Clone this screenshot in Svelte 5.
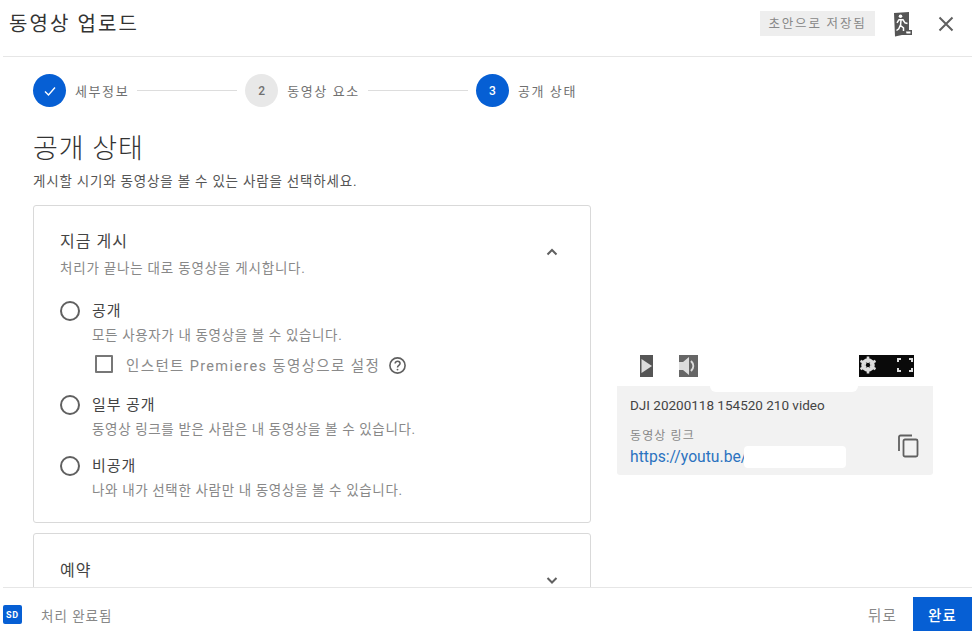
<script>
  const options = [
    { title: '공개', desc: '모든 사용자가 내 동영상을 볼 수 있습니다.', premiere: true },
    { title: '일부 공개', desc: '동영상 링크를 받은 사람은 내 동영상을 볼 수 있습니다.' },
    { title: '비공개', desc: '나와 내가 선택한 사람만 내 동영상을 볼 수 있습니다.' }
  ];
</script>

<div class="dialog">
  <header class="top">
    <h1>동영상 업로드</h1>
    <span class="saved">초안으로 저장됨</span>
    <svg class="exit" width="20" height="26" viewBox="0 0 20 26">
      <path d="M1 2 L16 1 V19 H19 V24 H9 L2 25.5Z" fill="#555"/>
      <circle cx="7.5" cy="5.2" r="1.8" fill="#fff"/>
      <path d="M5.5 8.8 L10 8.8 L12 11.8 L14.5 12.5 M8 9.2 L7.5 14.5 L10.5 16.8 L10.5 20 M7.2 14.5 L5.8 17.8 L3.5 19.5 M5.8 9 L4 11.8" stroke="#fff" stroke-width="1.5" fill="none"/>
      <path d="M13 20.5 L17.5 20.5 L17.5 22.5 L13.5 22.5Z" fill="#fff"/>
    </svg>
    <svg class="close" width="24" height="24" viewBox="0 0 24 24">
      <path d="M5.5 5.5 L18.5 18.5 M18.5 5.5 L5.5 18.5" stroke="#606060" stroke-width="2" fill="none"/>
    </svg>
  </header>

  <main class="body">
    <div class="steps">
      <span class="dot on">
        <svg width="16" height="16" viewBox="0 0 16 16"><path d="M3 8.5 L6.5 12 L13 4.5" stroke="#fff" stroke-width="1.4" fill="none"/></svg>
      </span>
      <span class="lbl">세부정보</span>
      <span class="line"></span>
      <span class="dot">2</span>
      <span class="lbl">동영상 요소</span>
      <span class="line"></span>
      <span class="dot on">3</span>
      <span class="lbl">공개 상태</span>
    </div>

    <div class="columns">
      <section class="left">
        <h2>공개 상태</h2>
        <p class="sub">게시할 시기와 동영상을 볼 수 있는 사람을 선택하세요.</p>

        <div class="card first">
          <div class="card-head">
            <div>
              <div class="card-title">지금 게시</div>
              <div class="card-desc">처리가 끝나는 대로 동영상을 게시합니다.</div>
            </div>
            <svg class="chev" width="24" height="24" viewBox="0 0 24 24"><path d="M7.5 14.5 L12 10 L16.5 14.5" stroke="#606060" stroke-width="2" fill="none"/></svg>
          </div>

          {#each options as o}
            <div class="opt">
              <span class="radio"></span>
              <div class="opt-text">
                <div class="opt-title">{o.title}</div>
                <div class="opt-desc">{o.desc}</div>
                {#if o.premiere}
                  <div class="premiere">
                    <span class="check"></span>
                    <span class="pr-label">인스턴트 Premieres 동영상으로 설정</span>
                    <svg width="20" height="20" viewBox="0 0 20 20">
                      <circle cx="10" cy="10" r="8" stroke="#606060" stroke-width="1.7" fill="none"/>
                      <path d="M7.5 8 C7.5 4.8 12.7 4.9 12.7 8 C12.7 10 10 9.8 10 12" stroke="#606060" stroke-width="1.6" fill="none"/>
                      <circle cx="10" cy="14.3" r="1" fill="#606060"/>
                    </svg>
                  </div>
                {/if}
              </div>
            </div>
          {/each}
        </div>

        <div class="card second">
          <div class="card-head">
            <div class="card-title">예약</div>
            <svg class="chev" width="24" height="24" viewBox="0 0 24 24"><path d="M7.5 10 L12 14.5 L16.5 10" stroke="#606060" stroke-width="2" fill="none"/></svg>
          </div>
        </div>
      </section>

      <aside class="right">
        <div class="player">
          <div class="ctrls">
            <span class="ctl play">
              <svg width="13" height="22" viewBox="0 0 13 22"><rect width="13" height="22" fill="#555"/><path d="M1.5 4 L12 11 L1.5 18Z" fill="#ddd"/></svg>
            </span>
            <span class="ctl vol">
              <svg width="19" height="22" viewBox="0 0 19 22"><rect width="19" height="22" fill="#666"/><path d="M0 7 H4 L10 2 V20 L4 15 H0Z" fill="#ddd"/><path d="M12 6 C15 9 15 13 12 16" stroke="#ddd" stroke-width="2" fill="none"/></svg>
            </span>
            <span class="right-ctls">
              <svg width="18" height="22" viewBox="0 0 18 22">
                <circle cx="9" cy="10" r="5" stroke="#ddd" stroke-width="3.6" fill="none"/>
                <path d="M9 1.5 V18.5 M1.5 5.8 L16.5 14.2 M1.5 14.2 L16.5 5.8" stroke="#ddd" stroke-width="2.6"/>
                <circle cx="9" cy="10" r="2.2" fill="#0a0a0a"/>
              </svg>
              <svg class="full" width="16" height="14" viewBox="0 0 16 14"><path d="M1 4 V1 H4 M12 1 H15 V4 M15 10 V13 H12 M4 13 H1 V10" stroke="#ddd" stroke-width="2" fill="none"/></svg>
            </span>
          </div>
        </div>
        <div class="info">
          <span class="notch"></span>
          <div class="file">DJI 20200118 154520 210 video</div>
          <div class="link-row">
            <div>
              <div class="link-label">동영상 링크</div>
              <div class="url"><span class="link">https://youtu.be/</span><span class="mask"></span></div>
            </div>
            <svg class="copy" width="24" height="24" viewBox="0 0 24 24">
              <path d="M16 1.5 H4.5 A1.5 1.5 0 0 0 3 3 V17" stroke="#606060" stroke-width="1.8" fill="none"/>
              <rect x="7.5" y="5.5" width="14" height="17" rx="1.5" stroke="#606060" stroke-width="1.8" fill="none"/>
            </svg>
          </div>
        </div>
      </aside>
    </div>
  </main>

  <footer class="bottom">
    <span class="sd">SD</span>
    <span class="status">처리 완료됨</span>
    <span class="back">뒤로</span>
    <span class="done">완료</span>
  </footer>
</div>

<style>
  :global(body) {
    margin: 0;
    background: #fff;
    overflow: hidden;
  }
  .dialog {
    width: 972px;
    height: 635px;
    display: flex;
    flex-direction: column;
    font-family: Roboto, "Noto Sans CJK KR", sans-serif;
    color: #0d0d0d;
  }
  .top {
    flex: none;
    height: 57px;
    margin-left: 3px;
    box-sizing: border-box;
    border-bottom: 1px solid #e6e6e6;
    display: flex;
    align-items: center;
    padding: 0 14px 12px 6px;
  }
  h1 {
    margin: 0;
    font-size: 20px;
    font-weight: 400;
    letter-spacing: 2.1px;
    color: #333;
    flex: 1;
  }
  .saved {
    background: #eeeeee;
    color: #888;
    font-size: 12.5px;
    letter-spacing: 1.8px;
    height: 25px;
    line-height: 25px;
    width: 115px;
    text-align: center;
    margin-top: 2px;
  }
  .exit { margin-left: 18px; margin-top: 3px; }
  .close { margin-left: 21px; margin-top: 3px; }

  .body {
    flex: 1;
    min-height: 0;
    overflow: hidden;
    padding-left: 33px;
  }
  .steps {
    display: flex;
    align-items: center;
    height: 33px;
    margin-top: 17px;
    font-size: 13px;
    color: #707070;
    letter-spacing: 1.6px;
  }
  .dot {
    width: 33px;
    height: 33px;
    border-radius: 50%;
    background: #e8e8e8;
    display: flex;
    align-items: center;
    justify-content: center;
    font-weight: 500;
    font-size: 12px;
    letter-spacing: 0;
    color: #707070;
    flex: none;
  }
  .dot.on {
    background: #065fd4;
    color: #fff;
  }
  .lbl { margin-left: 9px; white-space: nowrap; }
  .line {
    width: 100px;
    height: 1px;
    background: #ddd;
    margin: 0 8px;
    flex: none;
  }
  .columns {
    display: flex;
    align-items: flex-start;
  }
  .left { width: 558px; flex: none; }
  h2 {
    margin: 24px 0 0;
    font-size: 27px;
    line-height: 36px;
    font-weight: 300;
    letter-spacing: 1px;
    color: #333;
  }
  .sub {
    margin: 5px 0 0;
    font-size: 13.5px;
    line-height: 18px;
    color: #555;
    letter-spacing: 0.8px;
  }
  .card {
    box-sizing: border-box;
    border: 1px solid #d9d9d9;
    border-radius: 3px;
    padding: 25px 26px 0;
  }
  .first { margin-top: 15px; height: 318px; }
  .second { margin-top: 10px; height: 80px; }
  .card-head {
    display: flex;
    justify-content: space-between;
    align-items: center;
  }
  .card-title {
    font-size: 16px;
    line-height: 22px;
    color: #444;
    letter-spacing: 1px;
  }
  .card-desc {
    font-size: 13.5px;
    line-height: 18px;
    color: #888;
    margin-top: 6px;
    letter-spacing: 0.8px;
  }
  .chev { margin-right: 0; margin-top: -4px; }
  .second .chev { margin-top: 9px; }
  .second .card-title { margin-top: -10px; }
  .opt {
    display: flex;
    margin-top: 24px;
    min-height: 45px;
  }
  .opt + .opt { margin-top: 19px; }
  .opt:last-child { margin-top: 16px; }
  .radio {
    width: 16px;
    height: 16px;
    border: 2.5px solid #606060;
    border-radius: 50%;
    flex: none;
  }
  .opt-text { margin-left: 10px; padding-left: 2px; }
  .opt-title {
    font-size: 15px;
    line-height: 20px;
    color: #444;
    letter-spacing: 0.9px;
  }
  .opt-desc {
    font-size: 13.5px;
    line-height: 18px;
    color: #888;
    margin-top: 5px;
    letter-spacing: 0.65px;
  }
  .premiere {
    display: flex;
    align-items: center;
    margin-top: 8px;
    height: 24px;
  }
  .check {
    width: 14px;
    height: 14px;
    border: 2px solid #777;
    border-radius: 1px;
    margin-left: 3px;
    flex: none;
  }
  .pr-label {
    margin-left: 13px;
    font-size: 14.5px;
    color: #8a8a8a;
    letter-spacing: 1.35px;
    white-space: nowrap;
  }
  .premiere svg { margin-left: 8px; margin-top: 2px; width: 19px; height: 19px; }

  .right {
    width: 316px;
    margin-left: 26px;
    flex: none;
    padding-top: 248px;
  }
  .player { height: 31px; }
  .ctrls {
    display: flex;
    align-items: center;
    height: 22px;
    padding-left: 23px;
  }
  .ctl { display: flex; }
  .vol { margin-left: 26px; }
  .right-ctls {
    margin-left: 161px;
    width: 55px;
    height: 22px;
    background: #0a0a0a;
    display: flex;
    align-items: center;
    gap: 20px;
    box-sizing: border-box;
  }
  .full { margin-top: -3px; }
  .info {
    position: relative;
    background: #f2f2f2;
    height: 89px;
    box-sizing: border-box;
    padding: 9px 13px 0;
    border-radius: 0 0 3px 3px;
  }
  .notch {
    position: absolute;
    left: 93px;
    right: 75px;
    top: 0;
    height: 6px;
    background: #fff;
    border-radius: 0 0 6px 6px;
  }
  .file {
    font-size: 13.5px;
    line-height: 20px;
    color: #444;
  }
  .link-row {
    display: flex;
    justify-content: space-between;
    align-items: center;
    margin-top: 13px;
  }
  .link-label {
    font-size: 12px;
    line-height: 17px;
    color: #888;
    letter-spacing: 1.1px;
  }
  .url {
    display: flex;
    align-items: center;
    font-size: 15.7px;
    line-height: 20px;
    margin-top: 1px;
  }
  .link { color: #2b72c0; }
  .mask {
    width: 102px;
    height: 22px;
    background: #fff;
    border-radius: 4px;
    margin-left: -3px;
  }
  .copy { margin-top: -4px; margin-right: 0; }

  .bottom {
    flex: none;
    height: 48px;
    margin-left: 3px;
    border-top: 1px solid #e6e6e6;
    box-sizing: border-box;
    display: flex;
    align-items: center;
    position: relative;
    padding-top: 6px;
  }
  .sd {
    width: 19px;
    height: 19px;
    background: #065fd4;
    color: #fff;
    font-size: 9px;
    font-weight: 700;
    letter-spacing: 0.8px;
    border-radius: 2px;
    display: flex;
    align-items: center;
    justify-content: center;
  }
  .status {
    margin-left: 19px;
    font-size: 13.5px;
    color: #888;
    letter-spacing: 1px;
    flex: 1;
  }
  .back {
    font-size: 14.5px;
    color: #888;
    letter-spacing: 1.2px;
    margin-right: 16px;
  }
  .done {
    width: 59px;
    height: 34px;
    background: #065fd4;
    color: #fff;
    font-size: 14.5px;
    font-weight: 500;
    letter-spacing: 1.2px;
    display: flex;
    align-items: center;
    justify-content: center;
    align-self: flex-start;
    margin-top: 3px;
  }
</style>
